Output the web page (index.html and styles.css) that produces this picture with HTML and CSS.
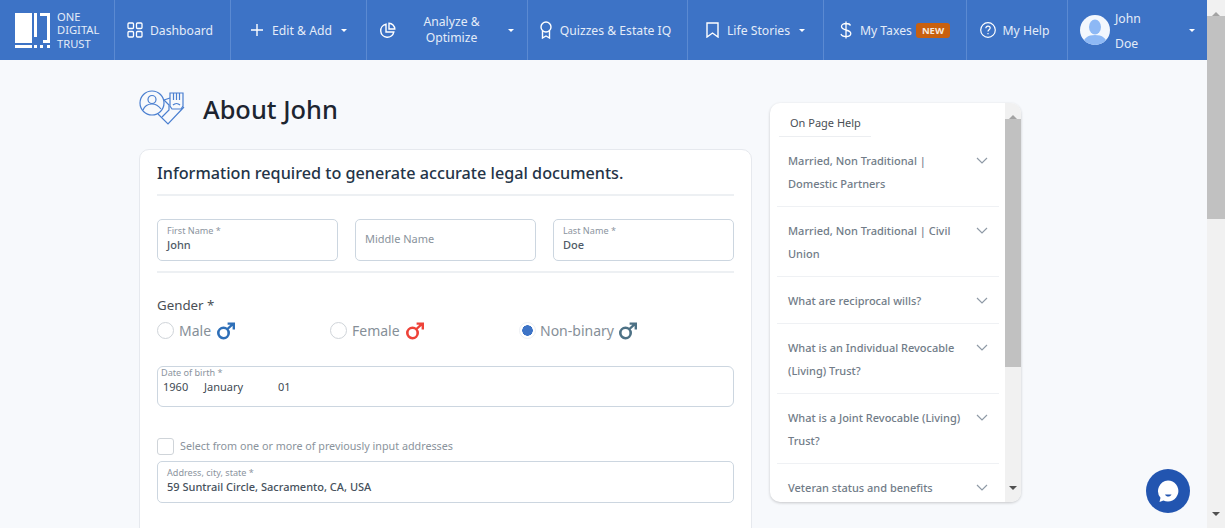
FILE: index.html
```html
<!DOCTYPE html>
<html lang="en">
<head>
    <meta charset="UTF-8">
    <meta name="viewport" content="width=device-width, initial-scale=1.0">
    <title>About John</title>
    <link rel="stylesheet" href="styles.css">
</head>
<body>
    <svg class="defs" width="0" height="0">
        <symbol id="mars" viewBox="0 0 20 18">
            <circle cx="7.5" cy="11" r="5.2" fill="none" stroke="currentColor" stroke-width="2.6"/>
            <path d="M11.5 7L17 1.8M11.6 1.6H17.8V7.6" fill="none" stroke="currentColor" stroke-width="2.4"/>
        </symbol>
        <symbol id="chevron" viewBox="0 0 12 7">
            <path d="M1 1l5 5 5-5" fill="none" stroke="currentColor" stroke-width="1.2"/>
        </symbol>
    </svg>

    <div class="page">
        <nav class="topnav">
            <a class="brand">
                <svg class="brand-mark" viewBox="0 0 36 36" width="36" height="36">
                    <path d="M0 0H17V30H0ZM19 0H22V24H19ZM25 0H35V30H28V27H32V3H25Z" fill="#fff"/>
                    <path d="M0 32H17V35H0ZM19 32H22V35H19ZM25 32H28V35H25ZM32 32H35V35H32Z" fill="#fff"/>
                </svg>
                <span class="brand-name">ONE<br>DIGITAL<br>TRUST</span>
            </a>
            <a class="nav-item nav-item-left">
                <svg width="16" height="16" viewBox="0 0 16 16" fill="none" stroke="#fff" stroke-width="1.3"><rect x="1" y="1" width="5.5" height="5.5" rx="1"/><rect x="9.5" y="1" width="5.5" height="5.5" rx="1"/><rect x="1" y="9.5" width="5.5" height="5.5" rx="1"/><rect x="9.5" y="9.5" width="5.5" height="5.5" rx="1"/></svg>
                <span>Dashboard</span>
            </a>
            <a class="nav-item">
                <svg width="14" height="14" viewBox="0 0 14 14" stroke="#fff" stroke-width="1.4"><path d="M7 1v12M1 7h12"/></svg>
                <span>Edit &amp; Add</span>
                <i class="caret"></i>
            </a>
            <a class="nav-item nav-item-wide">
                <svg width="17" height="17" viewBox="0 0 17 17" fill="none" stroke="#fff" stroke-width="1.4"><path d="M7 2.2A6.6 6.6 0 1 0 14.8 10H7Z"/><path d="M10 1.2A6 6 0 0 1 15.8 7H10Z"/></svg>
                <span class="nav-label-two">Analyze &amp;<br>Optimize</span>
                <i class="caret"></i>
            </a>
            <a class="nav-item nav-item-left">
                <svg width="14" height="18" viewBox="0 0 14 18" fill="none" stroke="#fff" stroke-width="1.4"><circle cx="7" cy="6" r="5"/><path d="M3.5 10v7L7 15l3.5 2v-7"/></svg>
                <span>Quizzes &amp; Estate IQ</span>
            </a>
            <a class="nav-item">
                <svg width="13" height="16" viewBox="0 0 13 16" fill="none" stroke="#fff" stroke-width="1.4"><path d="M1 1h11v14l-5.500-4L1 15Z"/></svg>
                <span>Life Stories</span>
                <i class="caret"></i>
            </a>
            <a class="nav-item">
                <svg width="12" height="18" viewBox="0 0 12 18" fill="none" stroke="#fff" stroke-width="1.3"><path d="M10.500 4.500C10 3 8.500 2.500 6 2.500S1.500 3.500 1.500 5.500 3.500 8.300 6 9s4.800 1.500 4.800 3.500S8.500 15.500 6 15.500s-4.500-.8-5-2.500M6 .5v17"/></svg>
                <span>My Taxes</span>
                <b class="badge-new">NEW</b>
            </a>
            <a class="nav-item nav-item-left">
                <svg width="16" height="16" viewBox="0 0 16 16" fill="none" stroke="#fff" stroke-width="1.2"><circle cx="8" cy="8" r="7.300"/><path d="M5.800 6.200C5.800 4.900 6.800 4.100 8 4.100s2.200.8 2.200 2c0 1.700-2.200 1.700-2.200 3.400"/><path d="M8 11v1.300"/></svg>
                <span>My Help</span>
            </a>
            <a class="nav-item nav-user">
                <svg class="avatar" width="30" height="30" viewBox="0 0 30 30"><circle cx="15" cy="15" r="15" fill="#f3f7fd"/><clipPath id="avatarClip"><circle cx="15" cy="15" r="15"/></clipPath><g clip-path="url(#avatarClip)" fill="#8db8f5"><ellipse cx="15" cy="12" rx="6" ry="7.500"/><path d="M3 30c0-7 5-10 12-10s12 3 12 10Z"/></g></svg>
                <span class="user-name">John<br>Doe</span>
                <i class="caret"></i>
            </a>
        </nav>

        <main class="content">
            <section class="main-col">
                <header class="page-head">
                    <svg class="page-icon" width="48" height="36" viewBox="0 0 48 36" fill="none" stroke="#4a7fd0" stroke-width="1.200">
                        <circle cx="13" cy="13" r="12"/>
                        <circle cx="13" cy="9.500" r="4"/>
                        <path d="M4 20c2-5 5-6 9-6s6 1 9 5"/>
                        <path d="M19 24l10 10 16-17"/>
                        <path d="M25 10l5 5v5l-7 7"/>
                        <path d="M31 16V3h13v13l-2 3h-9Z"/>
                        <path d="M34.500 3v7M37.500 3v7M40.500 3v7M34 15c2-2 5-2 7 0"/>
                        <path d="M25 10l6-2"/>
                    </svg>
                    <h1>About John</h1>
                </header>

                <form class="form-card">
                    <h2>Information required to generate accurate legal documents.</h2>

                    <div class="name-row">
                        <div class="field"><label>First Name *</label><span>John</span></div>
                        <div class="field field-empty"><span>Middle Name</span></div>
                        <div class="field"><label>Last Name *</label><span>Doe</span></div>
                    </div>

                    <p class="gender-label">Gender *</p>
                    <div class="gender-row">
                        <div class="radio"><i class="radio-dot"></i>Male <svg class="mars mars-male" width="20" height="18"><use href="#mars"/></svg></div>
                        <div class="radio"><i class="radio-dot"></i>Female <svg class="mars mars-female" width="20" height="18"><use href="#mars"/></svg></div>
                        <div class="radio"><i class="radio-dot radio-on"></i>Non-binary <svg class="mars mars-other" width="20" height="18"><use href="#mars"/></svg></div>
                    </div>

                    <div class="field field-date">
                        <label>Date of birth *</label>
                        <div class="date-parts"><span>1960</span><span>January</span><span>01</span></div>
                    </div>

                    <div class="check-row"><i class="checkbox"></i>Select from one or more of previously input addresses</div>

                    <div class="field field-address"><label>Address, city, state *</label><span>59 Suntrail Circle, Sacramento, CA, USA</span></div>
                </form>
            </section>

            <aside class="help-card">
                <div class="help-body">
                    <div class="help-title">On Page Help</div>
                    <div class="help-item"><span>Married, Non Traditional | Domestic Partners</span><svg width="12" height="7"><use href="#chevron"/></svg></div>
                    <div class="help-item"><span>Married, Non Traditional | Civil Union</span><svg width="12" height="7"><use href="#chevron"/></svg></div>
                    <div class="help-item"><span>What are reciprocal wills?</span><svg width="12" height="7"><use href="#chevron"/></svg></div>
                    <div class="help-item"><span>What is an Individual Revocable (Living) Trust?</span><svg width="12" height="7"><use href="#chevron"/></svg></div>
                    <div class="help-item"><span>What is a Joint Revocable (Living) Trust?</span><svg width="12" height="7"><use href="#chevron"/></svg></div>
                    <div class="help-item"><span>Veteran status and benefits</span><svg width="12" height="7"><use href="#chevron"/></svg></div>
                </div>
                <div class="scrollbar scrollbar-small">
                    <i class="arrow-up"></i>
                    <div class="thumb"></div>
                    <i class="arrow-down"></i>
                </div>
            </aside>
        </main>
    </div>

    <div class="scrollbar scrollbar-page">
        <i class="arrow-up"></i>
        <div class="thumb"></div>
        <i class="arrow-down"></i>
    </div>

    <button class="chat-button" type="button" aria-label="Chat">
        <svg width="26" height="26" viewBox="0 0 26 26"><path d="M13 2.500a10.500 10.500 0 1 1-4.600 20L4.500 24l1-4.300A10.500 10.500 0 0 1 13 2.500Z" fill="#fff"/><path d="M10 16.500h6.500c-.8 1.500-2 2-3.300 2s-2.500-.6-3.200-2Z" fill="#2255b0"/></svg>
    </button>
</body>
</html>
```

FILE: styles.css
```css
html, body {
    height: 100%;
    margin: 0;
    overflow: hidden;
}
body {
    display: flex;
    font-family: "Noto Sans", "Open Sans", sans-serif;
    background-color: #f7f9fc;
    color: #212b36;
}
.defs {
    display: none;
}
.page {
    flex: 1;
    min-width: 0;
    display: flex;
    flex-direction: column;
}

/* top bar */
.topnav {
    height: 60px;
    flex: none;
    display: grid;
    grid-template-columns: 114px 116px 136px 161px 160px 136px 143px 101px 1fr;
    background-color: #3d73c6;
    color: #e4ecf8;
    font-size: 12.2px;
}
.brand {
    display: flex;
    align-items: center;
    padding-left: 15px;
    gap: 6px;
}
.brand-mark {
    margin-top: 1px;
}
.brand-name {
    font-size: 11.2px;
    line-height: 13.500px;
}
.nav-item {
    display: flex;
    align-items: center;
    justify-content: center;
    gap: 8px;
    border-left: 1px solid #5b8ad2;
}
.nav-item-left {
    padding-right: 5px;
    gap: 7px;
}
.nav-item-wide {
    justify-content: flex-start;
    padding-left: 12px;
}
.nav-label-two {
    flex: 1;
    text-align: center;
    line-height: 16px;
}
.nav-item-wide .caret {
    margin-right: 13px;
}
.caret {
    width: 0;
    height: 0;
    margin-left: 1px;
    border-left: 3.500px solid transparent;
    border-right: 3.500px solid transparent;
    border-top: 3.500px solid #fff;
}
.badge-new {
    margin-left: -4px;
    padding: 1px 6px;
    border-radius: 3px;
    background-color: #c8600f;
    color: #f5e8dc;
    font-size: 9.500px;
    line-height: 13px;
}
.nav-user {
    justify-content: flex-start;
    padding-left: 12px;
    gap: 5px;
}
.user-name {
    flex: 1;
    margin-top: 1px;
    line-height: 25px;
}
.nav-user .caret {
    margin-right: 12px;
}

/* content */
.content {
    flex: 1;
    min-height: 0;
    display: flex;
    align-items: flex-start;
    gap: 18px;
    padding-left: 139px;
}
.main-col {
    width: 613px;
    flex: none;
}
.page-head {
    height: 89px;
    box-sizing: border-box;
    padding-top: 8px;
    display: flex;
    align-items: center;
    gap: 16px;
}
.page-icon {
    margin-top: -2px;
}
.page-head h1 {
    margin: 0;
    font-size: 25.4px;
    font-weight: 500;
    line-height: 34px;
    color: #1d2530;
}
.form-card {
    height: 400px;
    box-sizing: border-box;
    padding: 11px 17px 0;
    background-color: #fff;
    border: 1px solid #e6e9ee;
    border-radius: 10px 10px 0 0;
}
.form-card h2 {
    margin: 0;
    padding-bottom: 9px;
    border-bottom: 2px solid #edf0f3;
    font-size: 16.2px;
    font-weight: 500;
    line-height: 24px;
    color: #243447;
}
.name-row {
    display: grid;
    grid-template-columns: repeat(3, 1fr);
    gap: 17px;
    margin-top: 23px;
    padding-bottom: 10px;
    border-bottom: 2px solid #edf0f3;
}
.field {
    height: 42px;
    box-sizing: border-box;
    padding: 4px 9px 0;
    border: 1.500px solid #ccd6e0;
    border-radius: 5px;
    background-color: #fff;
    font-size: 11px;
    font-weight: 500;
    line-height: 14px;
    color: #4f5b67;
}
.field label {
    display: block;
    font-size: 9.100px;
    font-weight: 400;
    line-height: 14px;
    color: #8b949e;
}
.field-empty {
    display: flex;
    align-items: center;
    padding-top: 0;
    padding-bottom: 2px;
    font-weight: 400;
    color: #8a939c;
}
.gender-label {
    margin: 22px 0 0;
    font-size: 13.300px;
    line-height: 20px;
    color: #4a4f55;
}
.gender-row {
    display: flex;
    margin-top: 4px;
}
.radio {
    width: 173px;
    height: 22px;
    display: flex;
    align-items: center;
    font-size: 14px;
    color: #868f98;
    gap: 5px;
}
.radio-dot {
    width: 17px;
    height: 17px;
    box-sizing: border-box;
    border: 1px solid #cfd4d9;
    border-radius: 50%;
    background-color: #fff;
}
.radio-on {
    border: 1px solid #edf0f4;
    background: radial-gradient(circle, #3d73c6 0, #3d73c6 5px, #fff 5.500px);
}
.radio:last-child {
    gap: 4px;
}
.radio:nth-child(2) {
    width: 189px;
}
.mars {
    margin-top: 1px;
}
.mars-male { color: #2e6fb8; }
.mars-female { color: #ee4238; }
.mars-other { color: #4d7185; }
.field-date {
    height: 41px;
    margin-top: 25px;
    padding: 1px 6px 0 3px;
    border-radius: 6px;
}
.field-date label {
    line-height: 10px;
    margin-bottom: 1px;
}
.date-parts {
    display: flex;
    padding-left: 2px;
    font-weight: 400;
    font-size: 11px;
    line-height: 15px;
    color: #414a53;
}
.date-parts span:nth-child(1) { width: 41px; }
.date-parts span:nth-child(2) { width: 74px; }
.check-row {
    display: flex;
    align-items: center;
    gap: 6px;
    margin-top: 30px;
    font-size: 10.750px;
    line-height: 18px;
    color: #8a939c;
}
.checkbox {
    width: 17px;
    height: 17px;
    box-sizing: border-box;
    border: 1px solid #cfd4d9;
    border-radius: 3px;
}
.field-address {
    height: 42px;
    margin-top: 6px;
    font-weight: 500;
    color: #46515c;
}

/* help panel */
.help-card {
    width: 251px;
    height: 399px;
    margin-top: 43px;
    flex: none;
    display: flex;
    overflow: hidden;
    background-color: #fff;
    border-radius: 10px;
    box-shadow: 0 1px 3px rgba(0, 0, 0, 0.2);
}
.help-body {
    flex: 1;
    min-width: 0;
    overflow: hidden;
    padding: 0 6px 0 7px;
}
.help-title {
    width: 92px;
    box-sizing: border-box;
    margin-left: 2px;
    padding: 10px 0 4px 11px;
    border-bottom: 1px solid #eceef1;
    font-size: 11px;
    line-height: 19px;
    color: #4a4f55;
}
.help-item {
    display: flex;
    align-items: flex-start;
    justify-content: space-between;
    padding: 12px 11px 11px 11px;
    border-bottom: 1px solid #eff1f4;
    font-size: 11px;
    font-weight: 500;
    line-height: 23px;
    color: #717c88;
}
.help-item span {
    width: 178px;
}
.help-item svg {
    margin-top: 8px;
    color: #8f9aa6;
}
.help-item:last-child {
    border-bottom: none;
}

/* scrollbars */
.scrollbar {
    flex: none;
    display: flex;
    flex-direction: column;
    align-items: center;
    background-color: #f1f1f1;
}
.scrollbar-page {
    width: 18px;
}
.scrollbar-small {
    width: 16px;
}
.arrow-up, .arrow-down {
    height: 16px;
    flex: none;
    width: 0;
    box-sizing: border-box;
    border-left: 4px solid transparent;
    border-right: 4px solid transparent;
}
.arrow-up {
    border-bottom: 4px solid #a3a3a3;
    border-top: 6px solid transparent;
}
.arrow-down {
    margin-top: auto;
    border-top: 4px solid #505050;
    border-bottom: 6px solid transparent;
}
.thumb {
    width: 100%;
    background-color: #c1c1c1;
}
.scrollbar-page .thumb {
    height: 203px;
}
.scrollbar-small .thumb {
    height: 248px;
}

.chat-button {
    position: fixed;
    left: 1146px;
    top: 469px;
    width: 44px;
    height: 44px;
    display: flex;
    align-items: center;
    justify-content: center;
    padding: 0;
    border: none;
    border-radius: 50%;
    background-color: #2255b0;
}
```
